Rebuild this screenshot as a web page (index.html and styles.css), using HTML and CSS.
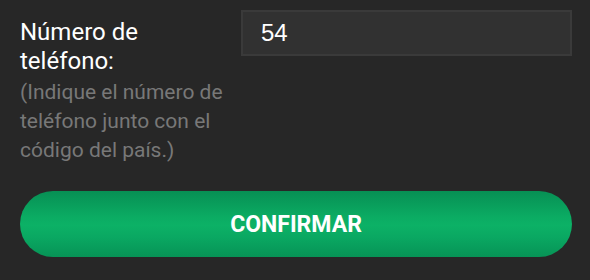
FILE: index.html
```html
<!DOCTYPE html>
<html lang="es">
<head>
<meta charset="utf-8">
<link rel="stylesheet" href="styles.css">
</head>
<body>
<div class="form">
  <div class="row">
    <div class="label-col">
      <div class="label">Número de teléfono:</div>
      <div class="hint">(Indique el número de teléfono junto con el código del país.)</div>
    </div>
    <div class="field">54</div>
  </div>
  <button class="confirm">CONFIRMAR</button>
</div>
</body>
</html>
```

FILE: styles.css
```css
html, body {
  margin: 0;
  padding: 0;
  background: #272727;
}
.form {
  width: 590px;
  height: 280px;
  box-sizing: border-box;
  padding: 10px 18px 0 20px;
  display: flex;
  flex-direction: column;
  font-family: Roboto, "Liberation Sans", sans-serif;
}
.row {
  display: flex;
  align-items: flex-start;
  gap: 11px;
}
.label-col {
  width: 210px;
  padding-top: 8px;
}
.label {
  color: #ffffff;
  font-size: 24px;
  line-height: 29px;
}
.hint {
  color: #787878;
  font-size: 21px;
  line-height: 29px;
  padding-top: 2px;
}
.field {
  flex: 1;
  height: 46px;
  box-sizing: border-box;
  background: #313131;
  border: 2px solid #3a3a3a;
  color: #ffffff;
  font-family: "Liberation Sans", Arial, sans-serif;
  font-size: 24px;
  line-height: 42px;
  padding-left: 18px;
}
.confirm {
  margin-top: 26px;
  width: 552px;
  height: 66px;
  border: none;
  border-radius: 33px;
  background: linear-gradient(to bottom, #078f54 0%, #0bac63 40%, #0cb166 52%, #0aa862 70%, #079356 100%);
  color: #ffffff;
  font-family: Roboto, "Liberation Sans", sans-serif;
  font-weight: bold;
  font-size: 23px;
  padding: 0;
}
```
